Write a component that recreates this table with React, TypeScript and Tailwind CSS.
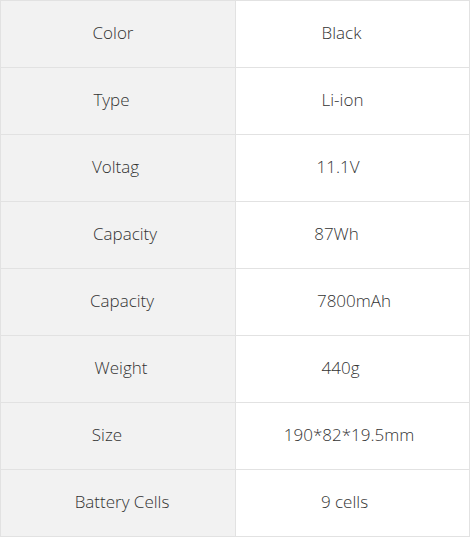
type Row = { k: string; v: string; kc: string; vc: string };

// the source page centres its text with stray spaces, so each cell is nudged a little
const rows: Row[] = [
  { k: "Color", v: "Black", kc: "pr-[10px]", vc: "pr-[22px]" },
  { k: "Type", v: "Li-ion", kc: "pr-[13px]", vc: "pr-[20px]" },
  { k: "Voltag", v: "11.1V", kc: "pr-[5px]", vc: "pr-[29px]" },
  { k: "Capacity", v: "87Wh", kc: "pl-[14px]", vc: "pr-[32px]" },
  { k: "Capacity", v: "7800mAh", kc: "pl-[8px]", vc: "pl-[3px]" },
  { k: "Weight", v: "440g", kc: "pl-[6px]", vc: "pr-[24px]" },
  { k: "Size", v: "190*82*19.5mm", kc: "pr-[22px]", vc: "pr-[7px]" },
  { k: "Battery Cells", v: "9 cells", kc: "pl-[8px]", vc: "pr-[16px]" },
];

export default function App() {
  return (
    <div className="bg-white" style={{ fontFamily: '"Open Sans", sans-serif' }}>
      <table className="w-[470px] border-collapse text-[17px] font-light text-[#333]">
        <tbody>
          {rows.map((r, i) => (
            <tr key={i} className="h-[67px]">
              <td
                className={`w-[235px] border border-[#e2e2e2] bg-[#f2f2f2] pb-[3px] text-center ${r.kc}`}
              >
                {r.k}
              </td>
              <td className={`border border-[#e2e2e2] bg-white pb-[3px] text-center ${r.vc}`}>
                {r.v}
              </td>
            </tr>
          ))}
        </tbody>
      </table>
    </div>
  );
}
